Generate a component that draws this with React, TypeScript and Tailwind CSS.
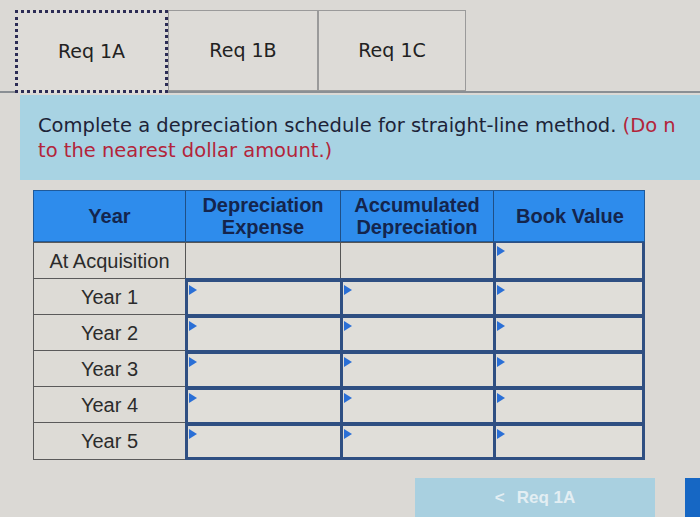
import React from "react";

const rows = ["At Acquisition", "Year 1", "Year 2", "Year 3", "Year 4", "Year 5"];

function Tri() {
  return (
    <svg className="absolute left-[1px] top-[3px]" width="8" height="10" viewBox="0 0 8 10">
      <polygon points="0,0 8,5 0,10" fill="#2a6fd6" />
    </svg>
  );
}

export default function App() {
  return (
    <div className="relative w-[700px] h-[517px] overflow-hidden bg-[#dbd9d5]" style={{ fontFamily: "'DejaVu Sans', Verdana, sans-serif" }}>
      {/* Tabs */}
      <div className="flex pl-[15px] pt-[10px] h-[93px] border-b-2 border-[#8a8f94]">
        <div className="w-[153px] h-[83px] flex items-center justify-center border-[3px] border-dotted border-[#2c2c55] bg-[#dedcd8] text-[19px] text-[#222]">Req 1A</div>
        <div className="w-[150px] h-[81px] flex items-center justify-center border border-[#9a9a9a] bg-[#dddbd7] text-[19px] text-[#222]">Req 1B</div>
        <div className="w-[148px] h-[81px] flex items-center justify-center border border-[#9a9a9a] bg-[#dddbd7] text-[19px] text-[#222]">Req 1C</div>
      </div>

      {/* Instruction */}
      <div className="ml-[20px] mt-[2px] h-[85px] bg-[#a8d3e3] pl-[18px] pt-[18px] text-[19.5px] leading-[25px] text-[#1d2338] whitespace-nowrap overflow-hidden">
        <div>Complete a depreciation schedule for straight-line method. <span className="text-[#b3243a]">(Do n</span></div>
        <div className="text-[#b3243a]">to the nearest dollar amount.)</div>
      </div>

      {/* Table */}
      <div className="ml-[33px] mt-[10px] w-[612px]" style={{ fontFamily: "'Liberation Sans', Arial, sans-serif" }}>
        <div className="grid grid-cols-[152px_155px_153px_152px] h-[52px] bg-[#2e8cec] border border-[#1f5a9a] text-[#14254d] font-bold text-[20px] leading-[22px]">
          <div className="flex items-center justify-center border-r border-[#1f4f86]">Year</div>
          <div className="flex items-center justify-center text-center border-r border-[#1f4f86]">Depreciation<br />Expense</div>
          <div className="flex items-center justify-center text-center border-r border-[#1f4f86]">Accumulated<br />Depreciation</div>
          <div className="flex items-center justify-center">Book Value</div>
        </div>
        {rows.map((r, i) => {
          const last = i === rows.length - 1;
          return (
            <div key={r} className="grid grid-cols-[152px_155px_153px_152px]">
              <div className={`h-[36px] flex items-center justify-center border-l border-t border-[#5a5a5a] ${last ? "border-b h-[38px]" : ""} text-[20px] text-[#2b2b2b] bg-[#dddbd6]`}>{r}</div>
              {i === 0 ? (
                <>
                  <div className="h-[36px] border-l border-t border-[#555] bg-[#dddbd6]" />
                  <div className="h-[36px] border-l border-t border-[#555] bg-[#dddbd6]" />
                  <div className="relative h-[36px] border-l-[3px] border-r-[3px] border-t border-[#2f4f82] bg-[#e0ded9]"><Tri /></div>
                </>
              ) : (
                <>
                  <div className={`relative border-t-[4px] border-l-[3px] border-[#2f4f82] ${last ? "border-b-[3px] h-[38px]" : "h-[36px]"} bg-[#e0ded9]`}><Tri /></div>
                  <div className={`relative border-t-[4px] border-l-[3px] border-[#2f4f82] ${last ? "border-b-[3px] h-[38px]" : "h-[36px]"} bg-[#e0ded9]`}><Tri /></div>
                  <div className={`relative border-t-[4px] border-l-[3px] border-r-[3px] border-[#2f4f82] ${last ? "border-b-[3px] h-[38px]" : "h-[36px]"} bg-[#e0ded9]`}><Tri /></div>
                </>
              )}
            </div>
          );
        })}
      </div>

      {/* Buttons */}
      <div className="flex justify-end mt-[18px] gap-[30px]">
        <div className="w-[240px] h-[40px] bg-[#a9d0e0] flex items-center justify-center gap-3 text-[#e3eef3] text-[17px] font-bold" style={{ fontFamily: "'Liberation Sans', Arial, sans-serif" }}>
          <span>&lt;</span><span>Req 1A</span>
        </div>
        <div className="w-[15px] h-[40px] bg-[#1667c4]" />
      </div>
    </div>
  );
}
